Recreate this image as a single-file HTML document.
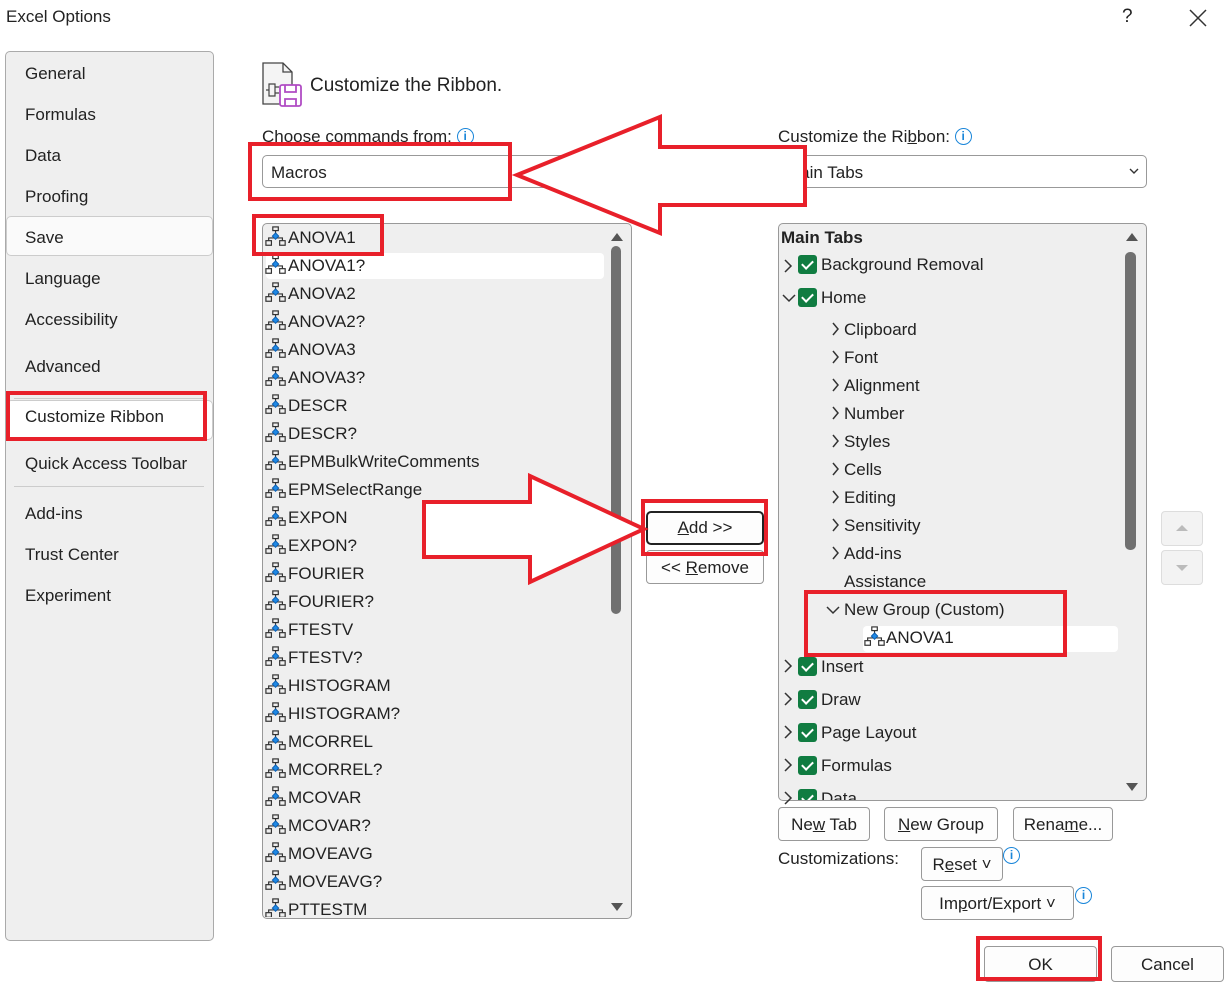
<!DOCTYPE html>
<html><head><meta charset="utf-8"><style>
*{box-sizing:border-box;margin:0;padding:0}
body{width:1230px;height:987px;background:#fff;position:relative;overflow:hidden;font-family:"Liberation Sans",sans-serif;color:#222;font-size:17px}
.a{position:absolute;white-space:nowrap}
.nav{position:absolute;left:5px;top:51px;width:209px;height:890px;background:#efefef;border:1px solid #aaa;border-radius:5px}
.nav div{position:absolute;left:19px}
.box{position:absolute;background:#efefef;border:1px solid #999;border-radius:5px}
.btn{position:absolute;background:#fdfdfd;border:1px solid #999;border-radius:4px;text-align:center;font-size:17px}
.red{position:absolute;border:4px solid #e8202a}
.it{position:absolute;left:2px;height:26px;line-height:26px;font-size:17px}
.it svg{vertical-align:-5px;margin-right:1px}
.chk{display:inline-block;width:19px;height:19px;background:#107c41;border-radius:3px;vertical-align:-4px;margin-right:4px;position:relative}
.chk:after{content:"";position:absolute;left:6px;top:3px;width:5px;height:9px;border:solid #fff;border-width:0 2px 2px 0;transform:rotate(45deg)}
.r{position:absolute;font-size:17px;height:26px;line-height:26px}
.info{display:inline-block;width:17px;height:17px;border:1.5px solid #1a86d9;border-radius:50%;color:#1a86d9;font-size:12px;font-weight:bold;text-align:center;line-height:14px;vertical-align:2px}
</style></head><body>
<svg width="0" height="0" style="position:absolute"><defs><symbol id="m" viewBox="0 0 24 24"><g fill="none" stroke="#333" stroke-width="1.3"><rect x="8.5" y="1" width="6" height="4"/><path d="M11.5 5v3M4 16v-3h15v3"/><rect x="1" y="16" width="6" height="5"/><rect x="16" y="16" width="6" height="5"/></g><path d="M11.5 7.5l3.5 3.5-3.5 3.5-3.5-3.5z" fill="#1e88e5" stroke="#0b5cad" stroke-width="1"/></symbol></defs></svg>

<div class="a" style="left:6px;top:7px;font-size:17px">Excel Options</div>
<div class="a" style="left:1122px;top:6px;font-size:19px">?</div>
<svg class="a" style="left:1189px;top:9px" width="18" height="18"><path d="M1 1L17 17M17 1L1 17" stroke="#333" stroke-width="1.5"/></svg>

<div class="nav">
<div style="top:12px">General</div>
<div style="top:53px">Formulas</div>
<div style="top:94px">Data</div>
<div style="top:135px">Proofing</div>
<div style="left:0;top:164px;width:207px;height:40px;background:#fafafa;border:1px solid #ccc;border-radius:5px"></div>
<div style="top:176px">Save</div>
<div style="top:217px">Language</div>
<div style="top:258px">Accessibility</div>
<div style="top:305px">Advanced</div>
<div style="left:8px;top:346px;width:190px;height:1px;background:#ccc"></div>
<div style="left:0;top:348px;width:207px;height:40px;background:#fff;border:1px solid #ccc;border-radius:5px"></div>
<div style="top:355px">Customize Ribbon</div>
<div style="top:402px">Quick Access Toolbar</div>
<div style="left:8px;top:434px;width:190px;height:1px;background:#ccc"></div>
<div style="top:452px">Add-ins</div>
<div style="top:493px">Trust Center</div>
<div style="top:534px">Experiment</div>
</div>
<div class="red" style="left:6px;top:391px;width:201px;height:50px"></div>

<svg class="a" style="left:261px;top:62px" width="44" height="46"><path d="M2 1h20l9 9v32H2z" fill="#f4f4f4" stroke="#444" stroke-width="1.3"/><path d="M22 1v9h9" fill="none" stroke="#444" stroke-width="1.3"/><path d="M8 22h6v12H8zM5 28h3M14 25h4M14 31h4" fill="none" stroke="#444" stroke-width="1.2"/><rect x="19" y="23" width="21" height="21" rx="2" fill="#fff" stroke="#b04cc4" stroke-width="1.8"/><path d="M24 23v7h11v-7M24 44v-7h11v7" fill="none" stroke="#b04cc4" stroke-width="1.8"/></svg>
<div class="a" style="left:310px;top:75px;font-size:19px">Customize the Ribbon.</div>

<div class="a" style="left:262px;top:127px">Choose commands from: <span class="info">i</span></div>
<div class="box" style="left:262px;top:155px;width:410px;height:33px;background:#fff;border-color:#999"></div>
<div class="a" style="left:271px;top:163px">Macros</div>

<div class="a" style="left:778px;top:127px">Customize the Ri<u>b</u>bon: <span class="info">i</span></div>
<div class="box" style="left:778px;top:155px;width:369px;height:33px;background:#fff"></div>
<div class="a" style="left:786px;top:163px">Main Tabs</div>
<svg class="a" style="left:1129px;top:167px" width="10" height="8"><path d="M1 2l4 4 4-4" fill="none" stroke="#333" stroke-width="1.4"/></svg>

<!-- left list -->
<div class="box" style="left:262px;top:223px;width:370px;height:696px">
<div style="position:absolute;left:3px;top:29px;width:338px;height:26px;background:#fff;border-radius:4px"></div>
<div style="position:absolute;left:348px;top:22px;width:10px;height:368px;background:#707070;border-radius:5px"></div>
<svg style="position:absolute;left:347px;top:8px" width="14" height="10"><path d="M1 9l6-8 6 8z" fill="#555"/></svg>
<svg style="position:absolute;left:347px;top:678px" width="14" height="10"><path d="M1 1l6 8 6-8z" fill="#555"/></svg>
<div class="it" style="top:1px"><svg width="22" height="22"><use href="#m"/></svg>ANOVA1</div>
<div class="it" style="top:29px"><svg width="22" height="22"><use href="#m"/></svg>ANOVA1?</div>
<div class="it" style="top:57px"><svg width="22" height="22"><use href="#m"/></svg>ANOVA2</div>
<div class="it" style="top:85px"><svg width="22" height="22"><use href="#m"/></svg>ANOVA2?</div>
<div class="it" style="top:113px"><svg width="22" height="22"><use href="#m"/></svg>ANOVA3</div>
<div class="it" style="top:141px"><svg width="22" height="22"><use href="#m"/></svg>ANOVA3?</div>
<div class="it" style="top:169px"><svg width="22" height="22"><use href="#m"/></svg>DESCR</div>
<div class="it" style="top:197px"><svg width="22" height="22"><use href="#m"/></svg>DESCR?</div>
<div class="it" style="top:225px"><svg width="22" height="22"><use href="#m"/></svg>EPMBulkWriteComments</div>
<div class="it" style="top:253px"><svg width="22" height="22"><use href="#m"/></svg>EPMSelectRange</div>
<div class="it" style="top:281px"><svg width="22" height="22"><use href="#m"/></svg>EXPON</div>
<div class="it" style="top:309px"><svg width="22" height="22"><use href="#m"/></svg>EXPON?</div>
<div class="it" style="top:337px"><svg width="22" height="22"><use href="#m"/></svg>FOURIER</div>
<div class="it" style="top:365px"><svg width="22" height="22"><use href="#m"/></svg>FOURIER?</div>
<div class="it" style="top:393px"><svg width="22" height="22"><use href="#m"/></svg>FTESTV</div>
<div class="it" style="top:421px"><svg width="22" height="22"><use href="#m"/></svg>FTESTV?</div>
<div class="it" style="top:449px"><svg width="22" height="22"><use href="#m"/></svg>HISTOGRAM</div>
<div class="it" style="top:477px"><svg width="22" height="22"><use href="#m"/></svg>HISTOGRAM?</div>
<div class="it" style="top:505px"><svg width="22" height="22"><use href="#m"/></svg>MCORREL</div>
<div class="it" style="top:533px"><svg width="22" height="22"><use href="#m"/></svg>MCORREL?</div>
<div class="it" style="top:561px"><svg width="22" height="22"><use href="#m"/></svg>MCOVAR</div>
<div class="it" style="top:589px"><svg width="22" height="22"><use href="#m"/></svg>MCOVAR?</div>
<div class="it" style="top:617px"><svg width="22" height="22"><use href="#m"/></svg>MOVEAVG</div>
<div class="it" style="top:645px"><svg width="22" height="22"><use href="#m"/></svg>MOVEAVG?</div>
<div class="it" style="top:673px;height:20px;overflow:hidden"><svg width="22" height="22"><use href="#m"/></svg>PTTESTM</div>
</div>

<!-- right tree -->
<div class="box" style="left:778px;top:223px;width:369px;height:578px;overflow:hidden">
<div style="position:absolute;left:346px;top:28px;width:11px;height:298px;background:#707070;border-radius:5px"></div>
<svg style="position:absolute;left:346px;top:8px" width="14" height="10"><path d="M1 9l6-8 6 8z" fill="#555"/></svg>
<svg style="position:absolute;left:346px;top:558px" width="14" height="10"><path d="M1 1l6 8 6-8z" fill="#555"/></svg>
<div style="position:absolute;left:84px;top:402px;width:255px;height:26px;background:#fff;border-radius:4px"></div>
<div class="r" style="left:2px;top:1px;font-weight:bold">Main Tabs</div>
</div>
<svg class="a" style="left:782px;top:255px" width="400" height="560" fill="none" stroke="#333" stroke-width="1.5">
<path d="M3 5l6 6-6 6"/><path d="M1 40l6 6 6-6"/>
<path d="M51 68l5 6-5 6M51 96l5 6-5 6M51 124l5 6-5 6M51 152l5 6-5 6M51 180l5 6-5 6M51 208l5 6-5 6M51 236l5 6-5 6M51 264l5 6-5 6M51 292l5 6-5 6"/>
<path d="M45 352l6 6 6-6"/>
<path d="M3 405l6 6-6 6M3 438l6 6-6 6M3 471l6 6-6 6M3 504l6 6-6 6M3 537l6 6-6 6"/>
</svg>
<div class="r" style="left:798px;top:252px"><span class="chk"></span>Background Removal</div>
<div class="r" style="left:798px;top:285px"><span class="chk"></span>Home</div>
<div class="r" style="left:844px;top:317px">Clipboard</div>
<div class="r" style="left:844px;top:345px">Font</div>
<div class="r" style="left:844px;top:373px">Alignment</div>
<div class="r" style="left:844px;top:401px">Number</div>
<div class="r" style="left:844px;top:429px">Styles</div>
<div class="r" style="left:844px;top:457px">Cells</div>
<div class="r" style="left:844px;top:485px">Editing</div>
<div class="r" style="left:844px;top:513px">Sensitivity</div>
<div class="r" style="left:844px;top:541px">Add-ins</div>
<div class="r" style="left:844px;top:569px">Assistance</div>
<div class="r" style="left:844px;top:597px">New Group (Custom)</div>
<div class="r" style="left:864px;top:625px"><svg width="22" height="22" style="vertical-align:-5px"><use href="#m"/></svg>ANOVA1</div>
<div class="r" style="left:798px;top:654px"><span class="chk"></span>Insert</div>
<div class="r" style="left:798px;top:687px"><span class="chk"></span>Draw</div>
<div class="r" style="left:798px;top:720px"><span class="chk"></span>Page Layout</div>
<div class="r" style="left:798px;top:753px"><span class="chk"></span>Formulas</div>
<div class="r" style="left:798px;top:786px;height:14px;overflow:hidden"><span class="chk"></span>Data</div>

<!-- add/remove -->
<div class="btn" style="left:646px;top:511px;width:118px;height:34px;line-height:30px;border:2px solid #222;border-radius:5px"><u>A</u>dd &gt;&gt;</div>
<div class="btn" style="left:646px;top:550px;width:118px;height:34px;line-height:34px">&lt;&lt; <u>R</u>emove</div>

<div class="btn" style="left:1161px;top:511px;width:42px;height:35px;background:#f3f3f3;border-color:#ddd"></div>
<div class="btn" style="left:1161px;top:550px;width:42px;height:35px;background:#f3f3f3;border-color:#ddd"></div>
<svg class="a" style="left:1176px;top:524px" width="12" height="8"><path d="M0 7l6-6 6 6z" fill="#bbb"/></svg>
<svg class="a" style="left:1176px;top:564px" width="12" height="8"><path d="M0 1l6 6 6-6z" fill="#bbb"/></svg>

<div class="btn" style="left:778px;top:807px;width:92px;height:34px;line-height:33px">Ne<u>w</u> Tab</div>
<div class="btn" style="left:884px;top:807px;width:114px;height:34px;line-height:33px"><u>N</u>ew Group</div>
<div class="btn" style="left:1013px;top:807px;width:100px;height:34px;line-height:33px">Rena<u>m</u>e...</div>
<div class="a" style="left:778px;top:849px">Customizations:</div>
<div class="btn" style="left:921px;top:847px;width:82px;height:34px;line-height:33px">R<u>e</u>set ˅</div>
<div class="a" style="left:1003px;top:846px"><span class="info">i</span></div>
<div class="btn" style="left:921px;top:886px;width:153px;height:34px;line-height:33px">Im<u>p</u>ort/Export ˅</div>
<div class="a" style="left:1075px;top:886px"><span class="info">i</span></div>

<div class="btn" style="left:984px;top:946px;width:113px;height:36px;line-height:36px">OK</div>
<div class="btn" style="left:1111px;top:946px;width:113px;height:36px;line-height:36px">Cancel</div>

<!-- annotations -->
<div class="red" style="left:248px;top:142px;width:264px;height:59px"></div>
<div class="red" style="left:252px;top:214px;width:132px;height:42px"></div>
<svg class="a" style="left:0;top:0" width="1230" height="987">
<path d="M517 175L660 117V147H805V205H660V233Z" fill="#fff" stroke="#e8202a" stroke-width="4" stroke-linejoin="miter"/>
<path d="M424 502H530V476L644 529L530 582V557H424Z" fill="#fff" stroke="#e8202a" stroke-width="4"/>
</svg>
<div class="red" style="left:641px;top:499px;width:127px;height:57px"></div>
<div class="red" style="left:804px;top:590px;width:263px;height:67px"></div>
<div class="red" style="left:976px;top:936px;width:126px;height:45px"></div>
</body></html>
